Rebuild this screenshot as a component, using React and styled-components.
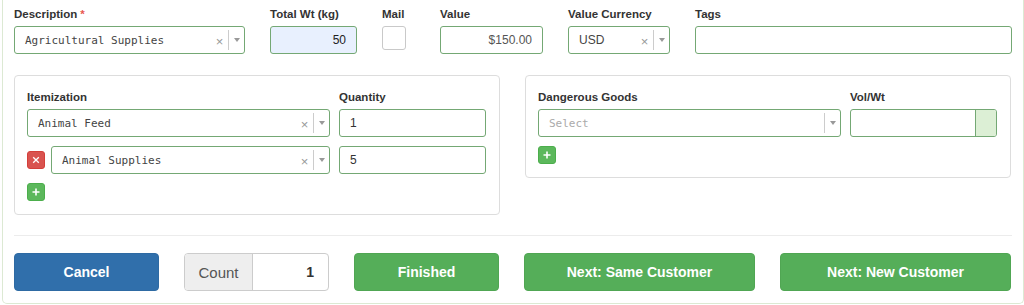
import React from 'react';
import styled, { createGlobalStyle } from 'styled-components';

const FIELD_BORDER = '#74a874';

const Global = createGlobalStyle`
  html, body { margin: 0; padding: 0; background: #fff; }
  body { font-family: "Liberation Sans", Arial, Helvetica, sans-serif; color: #333; }
  *, *::before, *::after { box-sizing: border-box; }
`;

const Outer = styled.div`
  margin-left: 2px;
  width: 1022px;
  border: 1px solid #dce9d3;
  border-top: none;
  border-radius: 0 0 5px 5px;
  padding: 7px 11px 12px 11px;
`;

const TopRow = styled.div`
  display: flex;
  gap: 25px;
  align-items: flex-start;
`;

const Field = styled.div`
  display: flex;
  flex-direction: column;
  width: ${p => (p.$w ? `${p.$w}px` : 'auto')};
  flex: ${p => (p.$w ? '0 0 auto' : '1 1 auto')};
`;

const Label = styled.div`
  font-size: 11.5px;
  font-weight: bold;
  line-height: 15px;
  margin-bottom: 4px;
  color: #333;
  white-space: nowrap;
`;

const Req = styled.span`
  color: #e8574f;
  margin-left: 3px;
`;

const TextBox = styled.div`
  height: 28px;
  border: 1px solid ${FIELD_BORDER};
  border-radius: 3px;
  background: ${p => p.$bg || '#fff'};
  padding: 0 10px;
  display: flex;
  align-items: center;
  justify-content: ${p => (p.$right ? 'flex-end' : 'flex-start')};
  font-size: 12px;
  color: ${p => p.$color || '#333'};
`;

const Check = styled.div`
  width: 24px;
  height: 24px;
  border: 1px solid #c9c9c9;
  border-radius: 3px;
  background: #fff;
`;

const SelectBox = styled.div`
  flex: 1 1 auto;
  height: 28px;
  border: 1px solid ${FIELD_BORDER};
  border-radius: 3px;
  background: #fff;
  display: flex;
  align-items: center;
`;

const SelectValue = styled.div`
  flex: 1 1 auto;
  padding-left: 10px;
  font-family: ${p => (p.$sans ? '"Liberation Sans", Arial, sans-serif' : '"DejaVu Sans Mono", "Liberation Mono", monospace')};
  font-size: ${p => (p.$sans ? '12px' : '11px')};
  color: ${p => (p.$placeholder ? '#aaa' : '#444')};
  white-space: nowrap;
  overflow: hidden;
`;

const Clear = styled.div`
  width: 17px;
  text-align: center;
  color: #999;
  font-size: 13px;
  line-height: 14px;
  margin-top: 3px;
`;

const Sep = styled.div`
  width: 1px;
  align-self: stretch;
  margin: 3px 0;
  background: #ccc;
`;

const ArrowZone = styled.div`
  width: 15px;
  display: flex;
  justify-content: center;
  align-items: center;
  &::after {
    content: '';
    border-left: 3px solid transparent;
    border-right: 3px solid transparent;
    border-top: 4px solid #999;
  }
`;

const Select = ({ value, placeholder, sans, clearable = true }) => (
  <SelectBox>
    <SelectValue $sans={sans} $placeholder={!value}>{value || placeholder}</SelectValue>
    {clearable && value ? <Clear>×</Clear> : null}
    <Sep />
    <ArrowZone />
  </SelectBox>
);

const PanelRow = styled.div`
  display: flex;
  gap: 25px;
  align-items: flex-start;
  margin-top: 21px;
`;

const Panel = styled.div`
  width: 486px;
  border: 1px solid #ddd;
  border-radius: 4px;
  padding: 14px 13px 13px 12px;
`;

const Grid = styled.div`
  display: grid;
  grid-template-columns: 303px 147px;
  column-gap: 9px;
`;

const ItemCell = styled.div`
  display: flex;
  align-items: center;
  gap: 6px;
  margin-top: ${p => (p.$first ? '0' : '9px')};
`;

const QtyCell = styled.div`
  margin-top: ${p => (p.$first ? '0' : '9px')};
`;

const SmallBtn = styled.div`
  width: 18px;
  height: 18px;
  border-radius: 3px;
  background: ${p => (p.$danger ? '#d9534f' : '#5cb85c')};
  border: 1px solid ${p => (p.$danger ? '#d43f3a' : '#4cae4c')};
  display: flex;
  align-items: center;
  justify-content: center;
  flex: 0 0 auto;
  margin-top: ${p => (p.$add ? '9px' : '0')};
`;

const AddonInput = styled.div`
  height: 28px;
  border: 1px solid ${FIELD_BORDER};
  border-radius: 3px;
  background: #fff;
  display: flex;
  overflow: hidden;
`;

const AddonFill = styled.div`
  flex: 1 1 auto;
`;

const AddonTail = styled.div`
  width: 21px;
  background: #dcefd5;
  border-left: 1px solid ${FIELD_BORDER};
`;

const Divider = styled.div`
  margin: 20px 0 17px;
  border-top: 1px solid #ececec;
`;

const ButtonRow = styled.div`
  display: flex;
  gap: 25px;
`;

const Button = styled.div`
  width: ${p => p.$w}px;
  height: 38px;
  border-radius: 4px;
  background: ${p => (p.$primary ? '#306fab' : '#55ae59')};
  border: 1px solid ${p => (p.$primary ? '#2e6aa3' : '#50a653')};
  color: #fff;
  font-size: 14px;
  font-weight: bold;
  display: flex;
  align-items: center;
  justify-content: center;
`;

const CountGroup = styled.div`
  width: 145px;
  height: 38px;
  border: 1px solid #ccc;
  border-radius: 4px;
  display: flex;
  overflow: hidden;
`;

const CountAddon = styled.div`
  width: 68px;
  background: #eee;
  border-right: 1px solid #ccc;
  color: #555;
  font-size: 15px;
  display: flex;
  align-items: center;
  justify-content: center;
`;

const CountInput = styled.div`
  flex: 1 1 auto;
  display: flex;
  align-items: center;
  justify-content: flex-end;
  padding-right: 14px;
  font-size: 14px;
  font-weight: bold;
  color: #333;
`;

const PlusIcon = () => (
  <svg width="10" height="10" viewBox="0 0 10 10">
    <path d="M5 1.5v7M1.5 5h7" stroke="#fff" strokeWidth="1.6" />
  </svg>
);

const XIcon = () => (
  <svg width="10" height="10" viewBox="0 0 10 10">
    <path d="M2.2 2.2l5.6 5.6M7.8 2.2l-5.6 5.6" stroke="#fff" strokeWidth="1.3" />
  </svg>
);

export default function App() {
  return (
    <>
      <Global />
      <Outer>
        <TopRow>
          <Field $w={231}>
            <Label>Description<Req>*</Req></Label>
            <Select value="Agricultural Supplies" />
          </Field>
          <Field $w={87}>
            <Label>Total Wt (kg)</Label>
            <TextBox $right $bg="#e8f0fe" $color="#222">50</TextBox>
          </Field>
          <Field $w={33}>
            <Label>Mail</Label>
            <Check />
          </Field>
          <Field $w={103}>
            <Label>Value</Label>
            <TextBox $right $color="#555">$150.00</TextBox>
          </Field>
          <Field $w={102}>
            <Label>Value Currency</Label>
            <Select value="USD" sans />
          </Field>
          <Field>
            <Label>Tags</Label>
            <TextBox />
          </Field>
        </TopRow>

        <PanelRow>
          <Panel>
            <Grid>
              <Label>Itemization</Label>
              <Label>Quantity</Label>
              <ItemCell $first>
                <Select value="Animal Feed" />
              </ItemCell>
              <QtyCell $first>
                <TextBox>1</TextBox>
              </QtyCell>
              <ItemCell>
                <SmallBtn $danger><XIcon /></SmallBtn>
                <Select value="Animal Supplies" />
              </ItemCell>
              <QtyCell>
                <TextBox>5</TextBox>
              </QtyCell>
            </Grid>
            <SmallBtn $add><PlusIcon /></SmallBtn>
          </Panel>
          <Panel>
            <Grid>
              <Label>Dangerous Goods</Label>
              <Label>Vol/Wt</Label>
              <ItemCell $first>
                <Select placeholder="Select" />
              </ItemCell>
              <QtyCell $first>
                <AddonInput>
                  <AddonFill />
                  <AddonTail />
                </AddonInput>
              </QtyCell>
            </Grid>
            <SmallBtn $add><PlusIcon /></SmallBtn>
          </Panel>
        </PanelRow>

        <Divider />

        <ButtonRow>
          <Button $w={145} $primary>Cancel</Button>
          <CountGroup>
            <CountAddon>Count</CountAddon>
            <CountInput>1</CountInput>
          </CountGroup>
          <Button $w={145}>Finished</Button>
          <Button $w={231}>Next: Same Customer</Button>
          <Button $w={231}>Next: New Customer</Button>
        </ButtonRow>
      </Outer>
    </>
  );
}
